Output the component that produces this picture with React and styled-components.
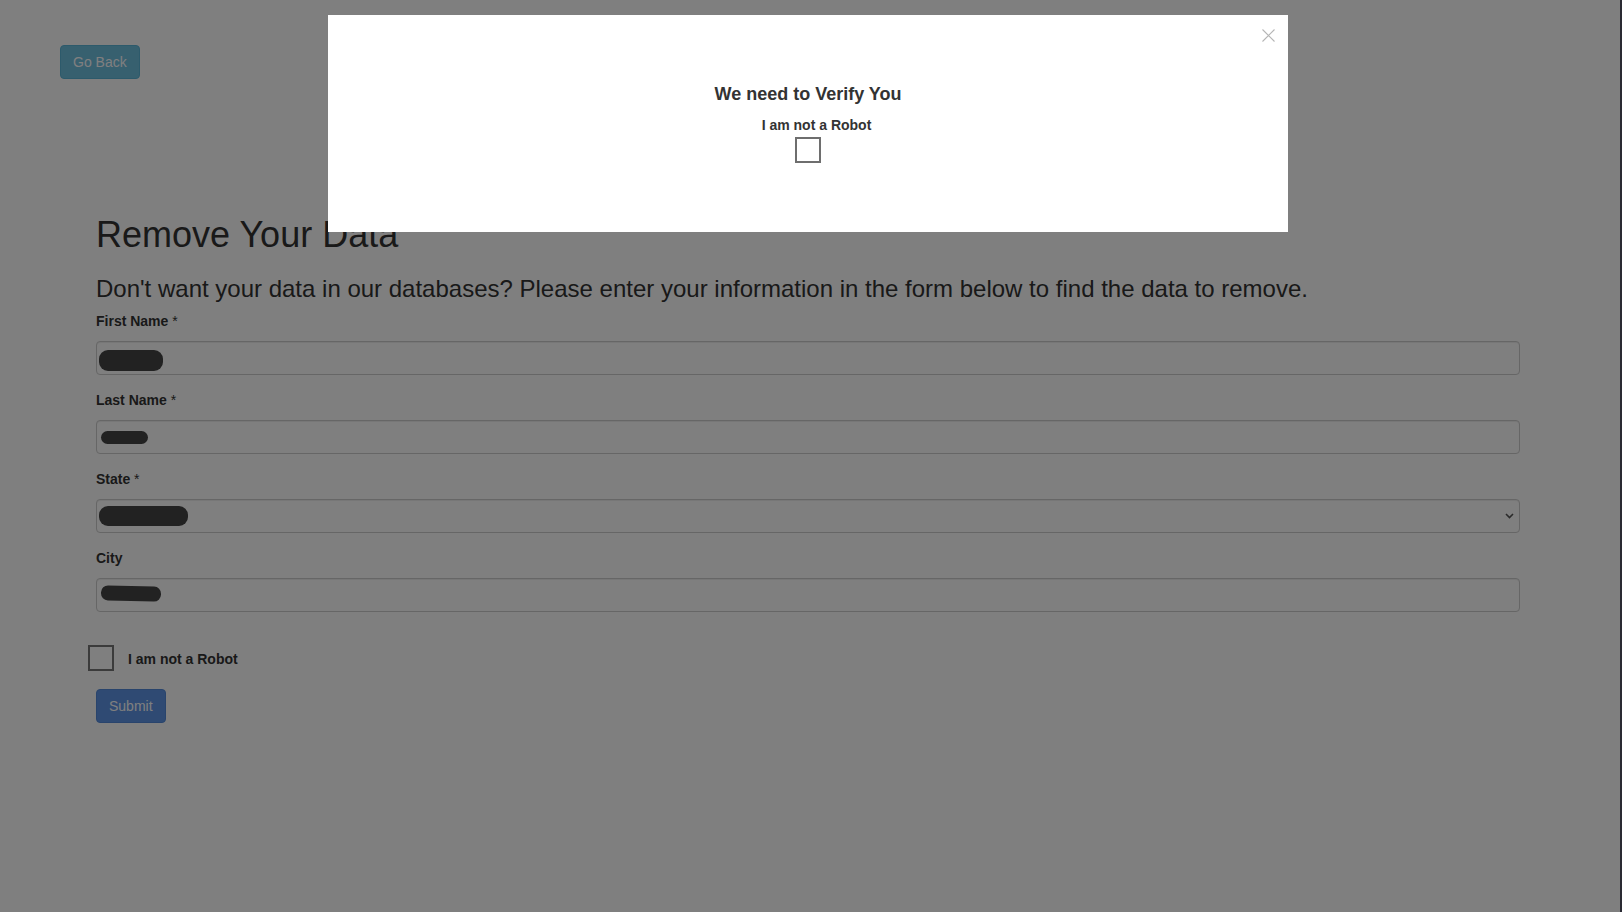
import React from "react";
import styled, { createGlobalStyle } from "styled-components";

const Global = createGlobalStyle`
  html, body { margin: 0; padding: 0; background: #fff; }
  body { font-family: "Liberation Sans", Arial, sans-serif; color: #333; font-size: 14px; line-height: 1.42857; }
  * { box-sizing: border-box; }
`;

const Page = styled.div`
  min-height: 912px;
`;

const TopBar = styled.div`
  padding: 45px 0 0 60px;
  display: flex;
`;

const Button = styled.button`
  font-family: "Liberation Sans", Arial, sans-serif;
  font-size: 14px;
  line-height: 20px;
  height: 34px;
  padding: 6px ${(p) => p.$padX || 12}px;
  border-radius: 4px;
  border: 1px solid ${(p) => p.$border};
  background: ${(p) => p.$bg};
  color: #fff;
  cursor: pointer;
`;

const Content = styled.main`
  padding: 136px 102px 0 96px;
  display: flex;
  flex-direction: column;
`;

const Title = styled.h1`
  margin: 0 0 21px;
  font-size: 36px;
  line-height: 1.1;
  font-weight: 500;
  color: #333;
`;

const Subtitle = styled.h3`
  margin: 0 0 9px;
  font-size: 24px;
  line-height: 1.1;
  font-weight: 500;
  color: #333;
`;

const Group = styled.div`
  display: flex;
  flex-direction: column;
  margin-bottom: 15px;
`;

const Label = styled.label`
  font-weight: bold;
  font-size: 14px;
  line-height: 20px;
  margin-bottom: 10px;
  color: #333;
`;

const Req = styled.span`
  font-weight: normal;
`;

const FieldWrap = styled.div`
  position: relative;
  height: 34px;
`;

const Input = styled.input`
  width: 100%;
  height: 34px;
  border: 1px solid #ccc;
  border-radius: 4px;
  background: #fff;
  box-shadow: inset 0 1px 1px rgba(0, 0, 0, 0.075);
  padding: 6px 12px;
  font-family: inherit;
  font-size: 14px;
`;

const Select = styled.select`
  width: 100%;
  height: 34px;
  border: 1px solid #ccc;
  border-radius: 4px;
  background: #fff;
  box-shadow: inset 0 1px 1px rgba(0, 0, 0, 0.075);
  padding: 6px 12px;
  font-family: inherit;
  font-size: 14px;
  appearance: none;
  -webkit-appearance: none;
`;

const Chevron = styled.svg`
  position: absolute;
  right: 6px;
  top: 14px;
  pointer-events: none;
`;

const Blob = styled.span`
  position: absolute;
  background: #444;
  border-radius: ${(p) => p.$r}px;
  transform: rotate(${(p) => p.$rot || 0}deg);
`;

const CheckRow = styled.div`
  display: flex;
  align-items: center;
  gap: 14px;
  margin: 18px 0 18px -8px;
`;

const Box = styled.input`
  appearance: none;
  -webkit-appearance: none;
  width: 26px;
  height: 26px;
  margin: 0;
  border: 2px solid ${(p) => p.$color};
  background: #fff;
  border-radius: 0;
`;

const CheckLabel = styled.label`
  font-weight: bold;
  font-size: 14px;
  line-height: 20px;
  color: #333;
  padding-top: 3px;
`;

const SubmitRow = styled.div`
  display: flex;
`;

const Backdrop = styled.div`
  position: fixed;
  inset: 0;
  background: rgba(0, 0, 0, 0.5);
  box-shadow: inset -2px 0 0 #2a2a33;
`;

const Modal = styled.div`
  position: fixed;
  top: 15px;
  left: 328px;
  width: 960px;
  height: 217px;
  background: #fff;
  display: flex;
  flex-direction: column;
  align-items: center;
  padding-top: 70px;
`;

const Close = styled.button`
  position: absolute;
  top: 12px;
  right: 12px;
  width: 16px;
  height: 16px;
  padding: 0;
  border: 0;
  background: transparent;
  display: flex;
  align-items: center;
  justify-content: center;
  cursor: pointer;
`;

const ModalTitle = styled.h4`
  margin: 0 0 10px;
  font-size: 18px;
  line-height: 1.1;
  font-weight: bold;
  color: #333;
`;

const ModalLabel = styled.label`
  font-weight: bold;
  font-size: 14px;
  line-height: 20px;
  color: #333;
  margin: 0 0 2px 17px;
`;

const fields = [
  { label: "First Name", req: true, blob: { left: 3, top: 9, width: 64, height: 21, r: 9 } },
  { label: "Last Name", req: true, blob: { left: 5, top: 11, width: 47, height: 13, r: 7 } },
  { label: "State", req: true, select: true, blob: { left: 3, top: 7, width: 89, height: 20, r: 9 } },
  { label: "City", blob: { left: 5, top: 8, width: 60, height: 15, r: 7, rot: 1.5 } },
];

export default function App() {
  return (
    <>
      <Global />
      <Page>
        <TopBar>
          <Button $bg="#6fc0df" $border="#5ab4d6" $padX={12}>Go Back</Button>
        </TopBar>
        <Content>
          <Title>Remove Your Data</Title>
          <Subtitle>
            Don't want your data in our databases? Please enter your information in the form below to find the data to remove.
          </Subtitle>
          {fields.map((f) => (
            <Group key={f.label}>
              <Label>
                {f.label}
                {f.req && <Req> *</Req>}
              </Label>
              <FieldWrap>
                {f.select ? (
                  <>
                    <Select defaultValue="">
                      <option value=""></option>
                    </Select>
                    <Chevron width="9" height="6" viewBox="0 0 9 6">
                      <path d="M1 1 L4.5 4.5 L8 1" fill="none" stroke="#555" strokeWidth="1.6" />
                    </Chevron>
                  </>
                ) : (
                  <Input type="text" />
                )}
                <Blob
                  $r={f.blob.r}
                  $rot={f.blob.rot}
                  style={{ left: f.blob.left, top: f.blob.top, width: f.blob.width, height: f.blob.height }}
                />
              </FieldWrap>
            </Group>
          ))}
          <CheckRow>
            <Box type="checkbox" $color="#777" />
            <CheckLabel>I am not a Robot</CheckLabel>
          </CheckRow>
          <SubmitRow>
            <Button $bg="#5e94e6" $border="#5288d8">Submit</Button>
          </SubmitRow>
        </Content>
      </Page>
      <Backdrop />
      <Modal>
        <Close aria-label="Close">
          <svg width="13" height="13" viewBox="0 0 13 13">
            <path d="M0.5 0.5 L12.5 12.5 M12.5 0.5 L0.5 12.5" stroke="#b5b5b5" strokeWidth="1.1" fill="none" />
          </svg>
        </Close>
        <ModalTitle>We need to Verify You</ModalTitle>
        <ModalLabel>I am not a Robot</ModalLabel>
        <Box type="checkbox" $color="#6e6e6e" />
      </Modal>
    </>
  );
}
